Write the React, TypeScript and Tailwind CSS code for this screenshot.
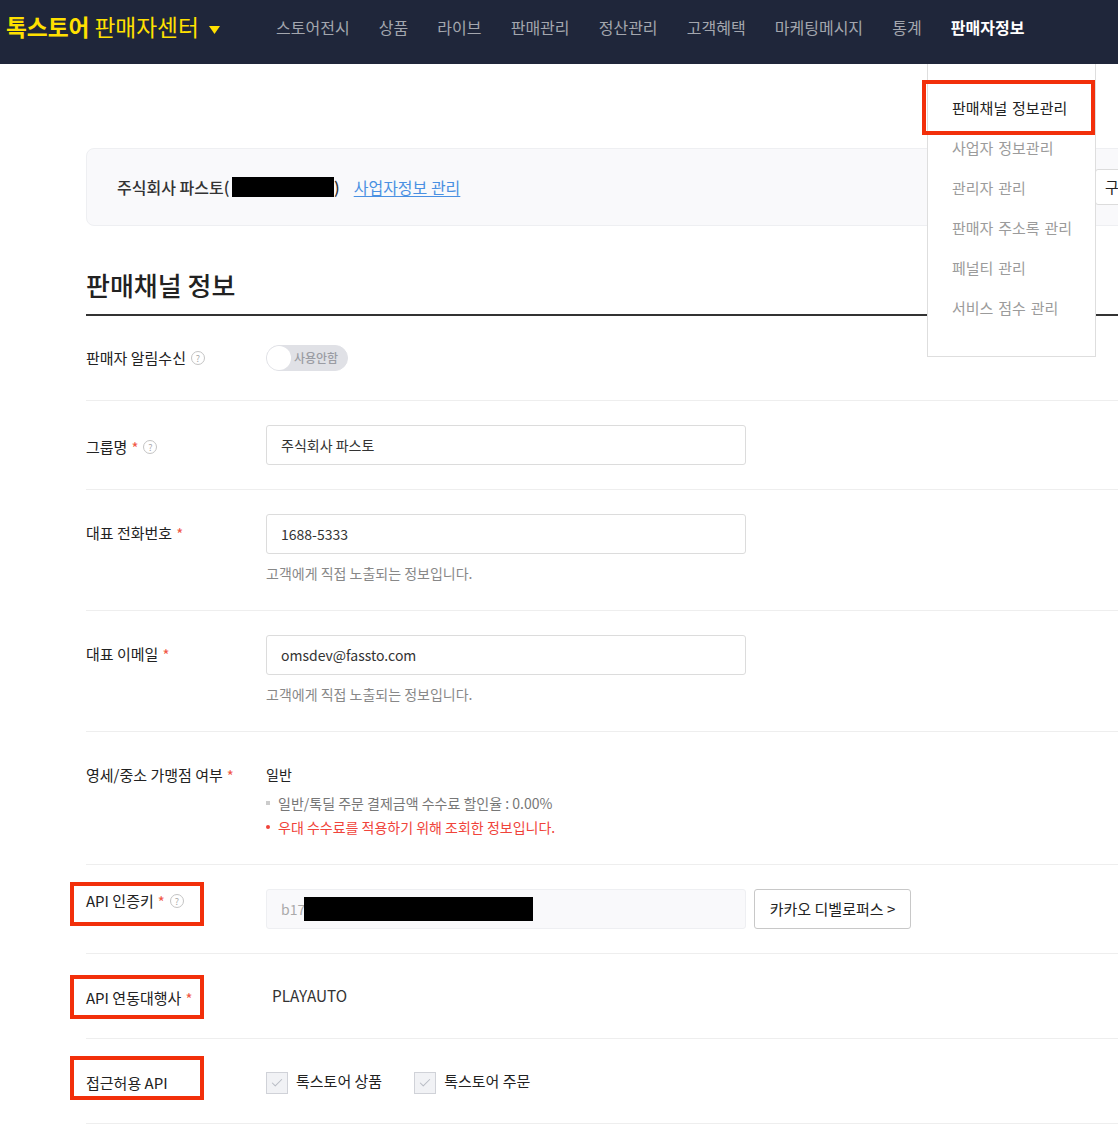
import { Check } from "lucide-react";

const font = { fontFamily: '"Noto Sans CJK KR", "Noto Sans", sans-serif' };

const navItems = ["스토어전시", "상품", "라이브", "판매관리", "정산관리", "고객혜택", "마케팅메시지", "통계"];
const menuItems = ["사업자 정보관리", "관리자 관리", "판매자 주소록 관리", "페널티 관리", "서비스 점수 관리"];

function Help() {
  return (
    <span className="ml-[5px] inline-flex h-[14px] w-[14px] items-center justify-center rounded-full border border-[#c4c4c4] text-[9px] leading-none text-[#aaa]">
      ?
    </span>
  );
}

function Req() {
  return <span className="ml-[4px] text-[15px] leading-none text-[#f15746]">*</span>;
}

function Label({ children, className = "" }: { children: React.ReactNode; className?: string }) {
  return (
    <div className={`flex w-[180px] shrink-0 items-center text-[15px] leading-[22px] text-[#222] ${className}`}>
      {children}
    </div>
  );
}

function TextBox({ value }: { value: string }) {
  return (
    <div className="flex h-10 w-[480px] items-center rounded-[3px] border border-[#dcdcdc] px-[14px] text-[14px] text-[#333]">
      {value}
    </div>
  );
}

function Hint() {
  return <p className="mt-[9px] text-[14px] leading-[20px] text-[#888]">고객에게 직접 노출되는 정보입니다.</p>;
}

function Checkbox({ label }: { label: string }) {
  return (
    <div className="flex items-center gap-2">
      <span className="flex h-[22px] w-[22px] items-center justify-center border border-[#d0d2d8] bg-[#f1f2f5]">
        <Check className="h-[14px] w-[14px] text-[#b8bcc4]" strokeWidth={1.75} />
      </span>
      <span className="pb-[4px] text-[15px] text-[#222]">{label}</span>
    </div>
  );
}

export default function App() {
  return (
    <div className="relative h-[1134px] w-[1118px] overflow-hidden bg-white" style={font}>
      {/* Header */}
      <header className="flex h-16 items-center bg-[#1f263a] pb-[10px]">
        <div className="flex w-[276px] shrink-0 items-center pl-[6px] text-[22.7px] text-[#ffe000]">
          <span className="font-bold">톡스토어</span>
          <span className="ml-[5px]">판매자센터</span>
          <svg className="ml-[10px] mt-[6px]" width="11" height="8" viewBox="0 0 11 8">
            <path d="M0 0h11L5.5 8z" fill="#ffe000" />
          </svg>
        </div>
        <nav className="flex items-center gap-[29.15px] text-[16px] text-[#a3a6ae]">
          {navItems.map((item) => (
            <span key={item}>{item}</span>
          ))}
          <span className="font-bold text-white">판매자정보</span>
        </nav>
      </header>

      {/* Content */}
      <main className="w-[1100px] pl-[86px] pt-[84px]">
        <div className="flex h-[78px] w-[1100px] items-center justify-between rounded-lg border border-[#eeeff2] bg-[#f9f9fb] pl-[30px]">
          <div className="flex items-center text-[16px]">
            <span className="w-[115px] whitespace-nowrap font-medium text-[#333]">주식회사 파스토(</span>
            <span className="h-5 w-[102px] bg-black" />
            <span className="font-medium text-[#333]">)</span>
            <a className="ml-[14px] text-[#4a90e2] underline underline-offset-2">사업자정보 관리</a>
          </div>
          <div className="flex h-9 w-[90px] items-center rounded-[3px] border border-[#dcdcdc] bg-white pl-[9px] text-[15px] text-[#222]">
            구
          </div>
        </div>

        <h2 className="mt-[41px] h-[47px] text-[26px] font-medium leading-[36px] text-[#222]">판매채널 정보</h2>

        <div className="w-[1100px] border-t-2 border-[#333]">
          <section className="flex h-[85px] items-start border-b border-[#eee] pt-[29px]">
            <Label className="h-[26px]">
              판매자 알림수신
              <Help />
            </Label>
            <div className="flex h-[26px] w-[82px] items-center rounded-full border border-[#e0e1e6] bg-[#e0e1e6]">
              <span className="h-6 w-6 rounded-full bg-white" />
              <span className="ml-[3px] text-[12px] font-medium text-[#9a9ca3]">사용안함</span>
            </div>
          </section>

          <section className="flex h-[89px] items-start border-b border-[#eee] pt-6">
            <Label className="pt-[11px]">
              그룹명
              <Req />
              <Help />
            </Label>
            <TextBox value="주식회사 파스토" />
          </section>

          <section className="flex h-[121px] items-start border-b border-[#eee] pt-6">
            <Label className="pt-[8px]">
              대표 전화번호
              <Req />
            </Label>
            <div>
              <TextBox value="1688-5333" />
              <Hint />
            </div>
          </section>

          <section className="flex h-[121px] items-start border-b border-[#eee] pt-6">
            <Label className="pt-[8px]">
              대표 이메일
              <Req />
            </Label>
            <div>
              <TextBox value="omsdev@fassto.com" />
              <Hint />
            </div>
          </section>

          <section className="flex h-[133px] items-start border-b border-[#eee] pt-[32px]">
            <Label>
              영세/중소 가맹점 여부
              <Req />
            </Label>
            <div>
              <p className="text-[14px] leading-[20px] text-[#222]">일반</p>
              <ul className="mt-[7px] text-[14px] leading-[24px]">
                <li className="flex items-center text-[#777]">
                  <span className="mr-[8px] h-1 w-1 bg-[#ccc]" />
                  일반/톡딜 주문 결제금액 수수료 할인율 : 0.00%
                </li>
                <li className="flex items-center text-[#f0433a]">
                  <span className="mr-[8px] h-1 w-1 rounded-full bg-[#f0433a]" />
                  우대 수수료를 적용하기 위해 조회한 정보입니다.
                </li>
              </ul>
            </div>
          </section>

          <section className="flex h-[89px] items-start border-b border-[#eee] pt-6">
            <Label className="pt-[1px]">
              API 인증키
              <Req />
              <Help />
            </Label>
            <div className="flex h-10 w-[480px] items-center rounded-[3px] border border-[#eeeff2] bg-[#f9f9fb] px-[14px] text-[14px] text-[#aaa]">
              b17
              <span className="-ml-px h-6 w-[229px] bg-black" />
            </div>
            <button className="ml-2 h-10 w-[157px] rounded-[3px] border border-[#c8c8c8] bg-white text-[15px] text-[#222]">
              카카오 디벨로퍼스 &gt;
            </button>
          </section>

          <section className="flex h-[85px] items-start border-b border-[#eee] pt-[33px]">
            <Label>
              API 연동대행사
              <Req />
            </Label>
            <span className="-mt-[2px] ml-[6px] text-[15.3px] leading-[20px] text-[#333]">PLAYAUTO</span>
          </section>

          <section className="flex h-[85px] items-start border-b border-[#eee] pt-[31px]">
            <Label className="pt-[2px]">접근허용 API</Label>
            <div className="flex gap-8">
              <Checkbox label="톡스토어 상품" />
              <Checkbox label="톡스토어 주문" />
            </div>
          </section>
        </div>
      </main>

      {/* Dropdown menu */}
      <div className="absolute left-[927px] top-16 h-[293px] w-[169px] border border-t-0 border-[#dedede] bg-white pl-6 pt-6 text-[15px] [word-spacing:1.5px]">
        <div className="flex h-10 items-center text-[#222]">판매채널 정보관리</div>
        {menuItems.map((item) => (
          <div key={item} className="flex h-10 items-center text-[#9b9b9b]">
            {item}
          </div>
        ))}
      </div>

      {/* Annotation boxes */}
      <div className="absolute left-[922px] top-[80px] h-[55px] w-[173px] border-4 border-[#f22f0a]" />
      <div className="absolute left-[70px] top-[882px] h-[44px] w-[134px] border-4 border-[#f22f0a]" />
      <div className="absolute left-[70px] top-[975px] h-[44px] w-[134px] border-4 border-[#f22f0a]" />
      <div className="absolute left-[70px] top-[1056px] h-[44px] w-[134px] border-4 border-[#f22f0a]" />
    </div>
  );
}
